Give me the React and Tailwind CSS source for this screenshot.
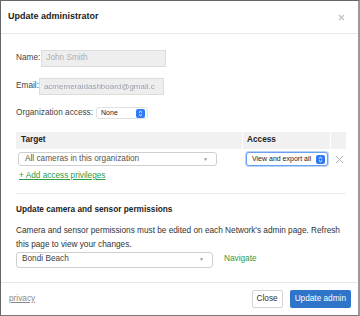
import React from "react";

const font = { fontFamily: '"Liberation Sans", Arial, sans-serif' };

function Stepper() {
  return (
    <span className="flex h-[9px] w-[9px] items-center justify-center rounded-[2px] bg-[#2f7bf5]">
      <svg width="5" height="7" viewBox="0 0 5 7" fill="none" stroke="white" strokeWidth="1">
        <path d="M1 2.6 L2.5 1.2 L4 2.6" />
        <path d="M1 4.4 L2.5 5.8 L4 4.4" />
      </svg>
    </span>
  );
}

function Caret() {
  return <span className="text-[5px] leading-none text-[#999]">▼</span>;
}

export default function App() {
  return (
    <div
      className="flex h-[316px] w-[360px] flex-col overflow-hidden border-b border-l border-t border-r-2 border-b-[#777] border-l-[#666] border-r-[#999] border-t-[#666] bg-white text-[#333]"
      style={font}
    >
      {/* Header */}
      <div className="flex h-[33px] shrink-0 items-center justify-between border-b border-[#e8e8e8] pl-[7px] pr-[13px]">
        <span className="text-[9px] font-bold text-[#222]">Update administrator</span>
        <svg width="7" height="7" viewBox="0 0 7 7" stroke="#c4c4c4" strokeWidth="1.4">
          <path d="M1 1 L6 6 M6 1 L1 6" />
        </svg>
      </div>

      {/* Body */}
      <div className="flex flex-1 flex-col pl-[15px] pr-[14px] text-[8.25px]">
        <div className="mt-[16px] flex h-[17px] items-center">
          <span className="mr-[1px] text-[#444]">Name:</span>
          <div className="flex h-[17px] w-[125px] items-center border border-[#dcdcdc] bg-[#eeeeee] pl-[4px] text-[#b0b0b0]">
            John Smith
          </div>
        </div>

        <div className="mt-[11px] flex h-[17px] items-center">
          <span className="text-[#444]">Email:</span>
          <div className="flex h-[17px] w-[125px] items-center overflow-hidden border border-[#dcdcdc] bg-[#eeeeee] pl-[4px]">
            <span className="whitespace-nowrap text-[8px] text-[#9aa0b0] blur-[0.7px]">
              acmemeraidashboard@gmail.c
            </span>
          </div>
        </div>

        <div className="mt-[12px] flex h-[12px] items-center">
          <span className="mr-[3px] text-[#444]">Organization access:</span>
          <div className="flex h-[12px] w-[52px] items-center justify-between rounded-[3px] border border-[#e0e0e0] bg-white pl-[4px] pr-[2px] text-[7px] text-[#222]">
            None
            <Stepper />
          </div>
        </div>

        {/* Table */}
        <div className="mt-[13px] w-[330px]">
          <div className="flex h-[17px] bg-[#f1f1f1] font-bold text-[#222]">
            <div className="flex w-[227px] items-center border-r border-white pl-[5px]">Target</div>
            <div className="flex w-[88px] items-center border-r border-white pl-[4px]">Access</div>
            <div className="flex-1" />
          </div>
          <div className="flex h-[20px] items-center">
            <div className="ml-[2px] flex h-[14px] w-[199px] items-center justify-between rounded-[3px] border border-[#cfcfcf] bg-white pl-[6px] pr-[8px] text-[#555]">
              All cameras in this organization
              <Caret />
            </div>
            <div className="ml-[29px] flex h-[14px] w-[82px] items-center justify-between rounded-[3px] border border-[#6aa0f0] bg-white pl-[5px] pr-[2px] text-[7px] text-[#222] shadow-[0_0_0_1px_#b9d3fa]">
              View and export all
              <Stepper />
            </div>
            <svg className="ml-[7px]" width="9" height="9" viewBox="0 0 9 9" stroke="#b5b5b5" strokeWidth="1">
              <path d="M1 1 L8 8 M8 1 L1 8" />
            </svg>
          </div>
          <div className="mt-[3px] pl-[3px] leading-none text-[#2f9a44] underline">
            + Add access privileges
          </div>
        </div>

        <div className="mt-[13px] h-px w-[330px] bg-[#ececec]" />

        <div className="mt-[12px] font-bold leading-none text-[#222]">
          Update camera and sensor permissions
        </div>

        <div className="mt-[9px] whitespace-nowrap leading-[14px] text-[#333]">
          Camera and sensor permissions must be edited on each Network's admin page. Refresh
          <br />
          this page to view your changes.
        </div>

        <div className="mt-0 flex h-[16px] items-center">
          <div className="flex h-[16px] w-[197px] items-center justify-between rounded-[3px] border border-[#cfcfcf] bg-white pl-[5px] pr-[8px] text-[#444]">
            Bondi Beach
            <Caret />
          </div>
          <span className="ml-[11px] text-[#2f9a44]">Navigate</span>
        </div>
      </div>

      {/* Footer */}
      <div className="flex h-[33px] shrink-0 items-center justify-between border-t border-[#e8e8e8] pl-[8px] pr-[7px] text-[8.25px]">
        <span className="text-[#8a8a8a] underline">privacy</span>
        <div className="flex items-center gap-[7px]">
          <button className="flex h-[18px] items-center rounded-[2px] border border-[#d5d5d5] bg-white px-[4px] text-[#333]">
            Close
          </button>
          <button className="flex h-[18px] items-center rounded-[2px] bg-[#2e74c9] px-[5px] text-white">
            Update admin
          </button>
        </div>
      </div>
    </div>
  );
}
